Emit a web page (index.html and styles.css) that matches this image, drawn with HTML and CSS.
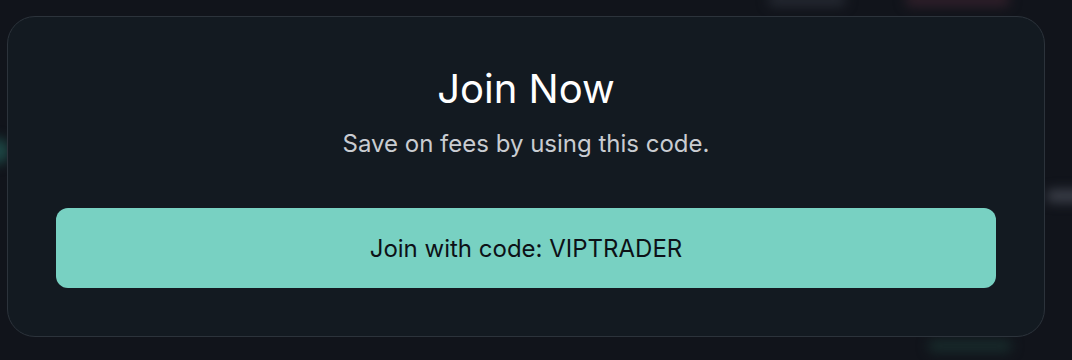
FILE: index.html
```html
<!DOCTYPE html>
<html lang="en">
<head>
    <meta charset="UTF-8">
    <meta name="viewport" content="width=device-width, initial-scale=1.0">
    <title>Join Now</title>
    <link rel="stylesheet" href="styles.css">
</head>
<body>
    <!-- blurred trading screen behind the dialog -->
    <div class="backdrop">
        <span class="ghost ghost-price"></span>
        <span class="ghost ghost-sell"></span>
        <span class="ghost ghost-left"></span>
        <span class="ghost ghost-right"></span>
        <span class="ghost ghost-buy"></span>
    </div>

    <div class="modal">
        <h1 class="modal-title">Join Now</h1>
        <p class="modal-text">Save on fees by using this code.</p>
        <button class="join-btn" type="button">Join with code: VIPTRADER</button>
    </div>
</body>
</html>
```

FILE: styles.css
```css
* {
    box-sizing: border-box;
}
body {
    margin: 0;
    height: 360px;
    overflow: hidden;
    font-family: Inter, "Noto Sans", sans-serif;
    background-color: #11141b;
    position: relative;
}
.backdrop {
    position: absolute;
    inset: 0;
    z-index: 0;
}
.ghost {
    position: absolute;
    height: 12px;
    border-radius: 6px;
    filter: blur(6px);
    background: #262a33;
}
.ghost-price {
    left: 768px;
    top: -6px;
    width: 78px;
}
.ghost-sell {
    left: 905px;
    top: -6px;
    width: 105px;
    background: #33202b;
}
.ghost-left {
    left: -16px;
    top: 138px;
    width: 26px;
    height: 26px;
    border-radius: 50%;
    background: #1d4644;
}
.ghost-right {
    left: 1046px;
    top: 190px;
    width: 40px;
    background: #3e424c;
}
.ghost-buy {
    left: 928px;
    top: 340px;
    width: 84px;
    background: #182c2c;
}
.modal {
    position: relative;
    z-index: 1;
    margin: 16px 0 0 7px;
    width: 1038px;
    height: 321px;
    padding: 48px;
    background-color: #131a21;
    border: 1px solid #2c333b;
    border-radius: 28px;
    text-align: center;
}
.modal-title {
    margin: 0;
    font-size: 40px;
    font-weight: 400;
    color: #ffffff;
    line-height: 48px;
}
.modal-text {
    margin: 16px 0 0;
    font-size: 24px;
    color: #c9ccd1;
    line-height: 30px;
}
.join-btn {
    display: block;
    width: 100%;
    height: 80px;
    margin-top: 49px;
    border: none;
    border-radius: 12px;
    background-color: #78d1c2;
    color: #0d1117;
    font-family: inherit;
    font-size: 24px;
    cursor: pointer;
}
```
